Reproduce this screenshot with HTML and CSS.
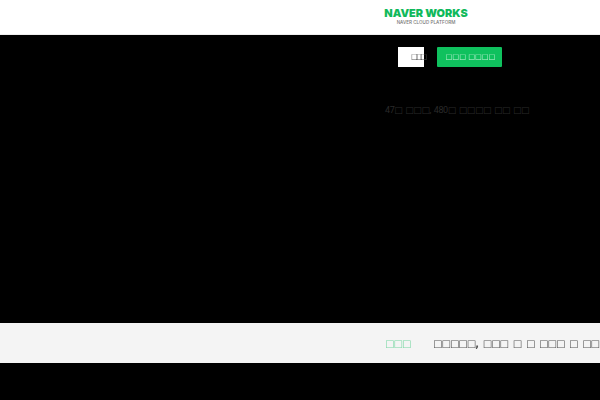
FILE: index.html
```html
<!DOCTYPE html>
<html lang="ko">
<head>
<meta charset="utf-8">
<title>NAVER WORKS</title>
<link rel="stylesheet" href="styles.css">
</head>
<body>
<header class="site-header">
  <div class="logo">
    <span class="logo-main">NAVER WORKS</span>
    <span class="logo-sub">NAVER CLOUD PLATFORM</span>
  </div>
</header>
<main class="hero">
  <div class="actions">
    <a class="btn btn-light">□□□</a>
    <a class="btn btn-green">□□□ □□□□</a>
  </div>
  <p class="tagline">47□ □□□, 480□ □□□□ □□ □□</p>
</main>
<section class="notice">
  <span class="notice-label">□□□</span>
  <span class="notice-text">□□□□□, □□□ □ □ □□□ □ □□□</span>
</section>
<div class="footer-fill"></div>
</body>
</html>
```
FILE: styles.css
```css
* { box-sizing: border-box; }
html, body { margin: 0; height: 100%; overflow: hidden; background: #000; }
body { width: 600px; height: 400px; display: flex; flex-direction: column; font-family: "DejaVu Sans", sans-serif; }
.site-header { flex: 0 0 35px; background: #fff; border-bottom: 1px solid #eee; padding: 7px 0 0 384px; }
.logo { width: 84px; display: flex; flex-direction: column; align-items: center; }
.logo-main { font: 900 10.9px/12px Inter, sans-serif; color: #10b95b; white-space: nowrap; }
.logo-sub { font: 500 4.6px/8px Inter, sans-serif; color: #777; white-space: nowrap; }
.hero { flex: 0 0 288px; background: #000; padding: 12px 0 0 398px; }
.actions { display: flex; gap: 13px; }
.btn { height: 20px; line-height: 20px; white-space: nowrap; will-change: transform; }
.btn-light { width: 26px; background: #fff; color: #555; font-size: 7.5px; letter-spacing: -2.6px; padding-left: 13px; }
.btn-green { width: 65px; padding-left: 2px; background: #0fc15e; color: #c4f2d8; font-size: 7.2px; text-align: center; border-radius: 1px; }
.tagline { margin: 36px 0 0 -13px; font: 9px/14px Roboto, "DejaVu Sans", sans-serif; letter-spacing: -.4px; word-spacing: 1px; color: #2a2a2a; white-space: nowrap; }
.notice { flex: 0 0 40px; background: #f4f4f4; padding-left: 385px; display: flex; align-items: center; gap: 23px; font-size: 10px; letter-spacing: -1px; white-space: nowrap; overflow: hidden; }
.notice-label { color: #7fd8a6; font-weight: 700; will-change: transform; }
.notice-text { color: #555; font-weight: 700; word-spacing: 2.2px; will-change: transform; }
.footer-fill { flex: 1; background: #000; }
```
